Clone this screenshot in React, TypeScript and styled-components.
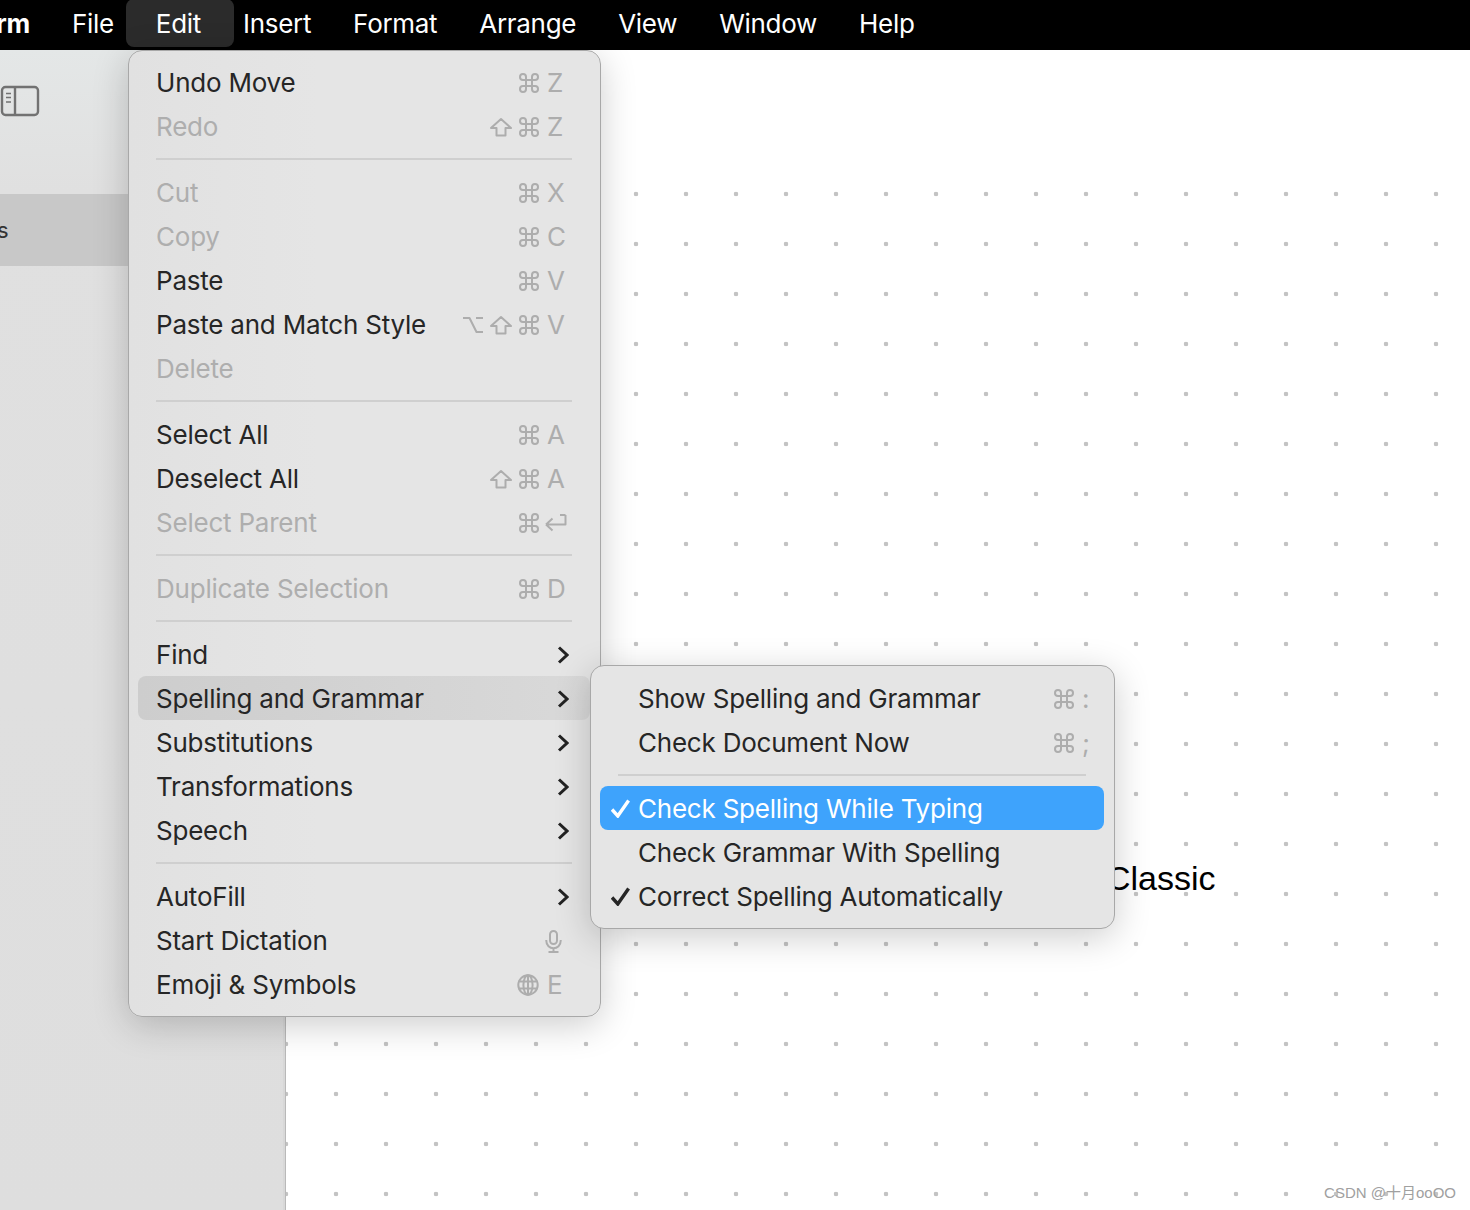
import styled, { createGlobalStyle } from "styled-components";

type Item =
  | { sep: true }
  | {
      label: string;
      off?: boolean;
      keys?: string[];
      arrow?: boolean;
      hover?: boolean;
      blue?: boolean;
      check?: boolean;
    };

const editMenu: Item[] = [
  { label: "Undo Move", keys: ["cmd", "Z"] },
  { label: "Redo", off: true, keys: ["shift", "cmd", "Z"] },
  { sep: true },
  { label: "Cut", off: true, keys: ["cmd", "X"] },
  { label: "Copy", off: true, keys: ["cmd", "C"] },
  { label: "Paste", keys: ["cmd", "V"] },
  { label: "Paste and Match Style", keys: ["opt", "shift", "cmd", "V"] },
  { label: "Delete", off: true },
  { sep: true },
  { label: "Select All", keys: ["cmd", "A"] },
  { label: "Deselect All", keys: ["shift", "cmd", "A"] },
  { label: "Select Parent", off: true, keys: ["cmd", "return"] },
  { sep: true },
  { label: "Duplicate Selection", off: true, keys: ["cmd", "D"] },
  { sep: true },
  { label: "Find", arrow: true },
  { label: "Spelling and Grammar", arrow: true, hover: true },
  { label: "Substitutions", arrow: true },
  { label: "Transformations", arrow: true },
  { label: "Speech", arrow: true },
  { sep: true },
  { label: "AutoFill", arrow: true },
  { label: "Start Dictation", keys: ["mic"] },
  { label: "Emoji & Symbols", keys: ["globe", "E"] },
];

const spellMenu: Item[] = [
  { label: "Show Spelling and Grammar", keys: ["cmd", ":"] },
  { label: "Check Document Now", keys: ["cmd", ";"] },
  { sep: true },
  { label: "Check Spelling While Typing", blue: true, check: true },
  { label: "Check Grammar With Spelling" },
  { label: "Correct Spelling Automatically", check: true },
];

const topMenus = ["File", "Edit", "Insert", "Format", "Arrange", "View", "Window", "Help"];

const KeyIcon = ({ name }: { name: string }) => {
  if (name === "cmd")
    return (
      <Glyph width="24" height="24" viewBox="0 0 24 24">
        <path d="M15 6v12a3 3 0 1 0 3-3H6a3 3 0 1 0 3 3V6a3 3 0 1 0-3 3h12a3 3 0 1 0-3-3" />
      </Glyph>
    );
  if (name === "shift")
    return (
      <ShiftGlyph width="22" height="20" viewBox="0 0 22 20">
        <path d="M11 2 L21 11 H15.5 V18.5 H6.5 V11 H1 Z" />
      </ShiftGlyph>
    );
  if (name === "opt")
    return (
      <Glyph width="22" height="18" viewBox="0 0 22 18">
        <path d="M1 2 H7.5 L14.5 16 H21 M14 2 H21" />
      </Glyph>
    );
  if (name === "return")
    return (
      <ReturnGlyph width="23" height="20" viewBox="0 0 23 20">
        <path d="M21.5 2 H16 M21.5 2 V11.5 H2 M2 11.5 L8.5 5.5 M2 11.5 L8.5 17.5" />
      </ReturnGlyph>
    );
  if (name === "mic")
    return (
      <MicGlyph width="17" height="23" viewBox="0 0 17 23">
        <rect x="5" y="1" width="7" height="13" rx="3.5" />
        <path d="M1.2 10 C1.2 21 15.8 21 15.8 10 M8.5 18 V22 M3.5 22 H13.5" />
      </MicGlyph>
    );
  if (name === "globe")
    return (
      <GlobeGlyph width="22" height="22" viewBox="0 0 22 22">
        <circle cx="11" cy="11" r="9.7" />
        <ellipse cx="11" cy="11" rx="4.6" ry="9.7" />
        <path d="M11 1 V21 M1.5 7.5 H20.5 M1.5 14.5 H20.5" />
      </GlobeGlyph>
    );
  return <KeyLetter>{name}</KeyLetter>;
};

const MenuRows = ({ items, $sub }: { items: Item[]; $sub?: boolean }) => (
  <>
    {items.map((item, idx) =>
      "sep" in item ? (
        <Separator key={idx} />
      ) : (
        <Row key={item.label} $sub={$sub} $off={item.off} $hover={item.hover} $blue={item.blue}>
          {$sub && (
            <CheckSlot>
              {item.check && (
                <svg width="20" height="19" viewBox="0 0 20 19" fill="none" stroke="currentColor" strokeWidth="3.4">
                  <path d="M1 10.5 L6.8 17 L17.6 1.5" />
                </svg>
              )}
            </CheckSlot>
          )}
          <RowLabel>{item.label}</RowLabel>
          {item.keys && (
            <Shortcut $sub={$sub}>
              {item.keys.map((k) => (
                <KeyIcon key={k} name={k} />
              ))}
            </Shortcut>
          )}
          {item.arrow && (
            <Chevron width="12" height="18" viewBox="0 0 12 18">
              <path d="M2 1.5 L10 9 L2 16.5" />
            </Chevron>
          )}
        </Row>
      )
    )}
  </>
);

const App = () => {
  return (
    <Page>
      <GlobalStyle />
      <MenuBar>
        <AppName>rm</AppName>
        {topMenus.map((name) => (
          <TopItem key={name} $open={name === "Edit"}>
            <span>{name}</span>
          </TopItem>
        ))}
      </MenuBar>
      <Body>
        <Sidebar>
          <SidebarTop>
            <svg width="40" height="32" viewBox="0 0 40 32" fill="none" stroke="#727272" strokeWidth="2.4">
              <rect x="2" y="2" width="36" height="28" rx="3.5" />
              <path d="M15 2 V30" />
              <path d="M6 8.5 H11 M6 12.5 H11 M6 17 H11" strokeWidth="1.6" />
            </svg>
          </SidebarTop>
          <SidebarRow>s</SidebarRow>
        </Sidebar>
        <Canvas>
          <DotGrid />
          <NodeTitle>Classic</NodeTitle>
        </Canvas>
      </Body>
      <EditPanel>
        <MenuRows items={editMenu} />
      </EditPanel>
      <SpellPanel>
        <MenuRows items={spellMenu} $sub />
      </SpellPanel>
      <Watermark>CSDN @十月ooOO</Watermark>
    </Page>
  );
};

export default App;

const GlobalStyle = createGlobalStyle`
  html, body {
    margin: 0;
    padding: 0;
    background: #fff;
  }
  body {
    font-family: Inter, "Liberation Sans", sans-serif;
  }
`;

const Page = styled.div`
  position: relative;
  width: 1470px;
  height: 1210px;
  overflow: hidden;
  display: flex;
  flex-direction: column;
`;

const MenuBar = styled.div`
  height: 50px;
  flex: none;
  background: #000;
  color: #fff;
  display: flex;
  align-items: center;
  gap: 42px;
  font-size: 26px;
  letter-spacing: -0.3px;
`;

const AppName = styled.div`
  font-weight: 700;
  margin-left: -4px;
  padding-bottom: 3px;
`;

const TopItem = styled.div<{ $open?: boolean }>`
  position: relative;
  padding-bottom: 3px;

  span {
    position: relative;
  }

  &::before {
    content: "";
    display: ${(p) => (p.$open ? "block" : "none")};
    position: absolute;
    left: -30px;
    right: -33px;
    top: -9px;
    height: 48px;
    border-radius: 8px;
    background: #2b2b2b;
  }
`;

const Body = styled.div`
  flex: 1;
  display: flex;
  min-height: 0;
`;

const Sidebar = styled.div`
  width: 285px;
  flex: none;
  background: linear-gradient(to bottom, #e4e7e7, #e0e0e0 140px, #dedede);
  border-right: 1px solid #b9b9b9;
  box-shadow: inset -2px 0 0 #d8d8d8;
`;

const SidebarTop = styled.div`
  height: 144px;
  box-sizing: border-box;
  padding: 35px 0 0 0;
  line-height: 0;
`;

const SidebarRow = styled.div`
  height: 72px;
  background: #c8c8c8;
  color: #333;
  font-size: 22px;
  line-height: 72px;
  text-indent: -3px;
`;

const Canvas = styled.div`
  flex: 1;
  position: relative;
  background: #fff;
  padding-top: 119px;
  display: flex;
`;

const DotGrid = styled.div`
  flex: 1;
  background-image: radial-gradient(circle at center, #c3c3c3 0, #c3c3c3 2px, transparent 2.6px);
  background-size: 50px 50px;
  background-position: -25px 0;
`;

const NodeTitle = styled.div`
  position: absolute;
  left: 820px;
  top: 806px;
  font-family: "Liberation Sans", Arial, sans-serif;
  font-size: 34px;
  line-height: 44px;
  color: #000;
`;

const Panel = styled.div`
  position: absolute;
  box-sizing: border-box;
  padding: 9px 10px 10px 9px;
  background: #e5e5e5;
  border: 1px solid #a8a8a8;
  box-shadow: 0 8px 36px rgba(0, 0, 0, 0.2);
`;

const EditPanel = styled(Panel)`
  left: 128px;
  top: 50px;
  width: 473px;
  height: 967px;
  border-radius: 14px;
  background: linear-gradient(to right, #e1e1e1, #e5e5e5 40%);
`;

const SpellPanel = styled(Panel)`
  left: 590px;
  top: 665px;
  width: 525px;
  height: 264px;
  padding-top: 10px;
  border-radius: 14px;
`;

const Row = styled.div<{ $sub?: boolean; $off?: boolean; $hover?: boolean; $blue?: boolean }>`
  height: 44px;
  box-sizing: border-box;
  padding-left: ${(p) => (p.$sub ? 11 : 18)}px;
  display: flex;
  align-items: center;
  font-size: 26px;
  letter-spacing: -0.22px;
  border-radius: 8px;
  color: ${(p) => (p.$blue ? "#fff" : p.$off ? "#aeaeae" : "#262626")};
  background: ${(p) =>
    p.$blue ? "#3ea3fc" : p.$hover ? "linear-gradient(to right, #cdcdcd, #d9d9d9)" : "transparent"};
`;

const CheckSlot = styled.div`
  width: 27px;
  flex: none;
  display: flex;
  align-items: center;
  line-height: 0;
`;

const RowLabel = styled.div`
  flex: 1;
  white-space: nowrap;
`;

const Shortcut = styled.div<{ $sub?: boolean }>`
  display: flex;
  align-items: center;
  gap: 6px;
  color: #adadad;
  margin-top: 2px;
  margin-right: ${(p) => (p.$sub ? 5 : 26)}px;
`;

const Glyph = styled.svg`
  flex: none;
  fill: none;
  stroke: currentColor;
  stroke-width: 2;
  stroke-linejoin: round;
`;

const ShiftGlyph = styled(Glyph)`
  margin-right: -1px;
`;

const ReturnGlyph = styled(Glyph)`
  margin: 0 -3px;
`;

const MicGlyph = styled(Glyph)`
  margin-right: 2px;
`;

const GlobeGlyph = styled(Glyph)`
  margin-right: 2px;
`;

const KeyLetter = styled.div`
  width: 17px;
  font-size: 26px;
  line-height: 24px;
`;

const Chevron = styled.svg`
  flex: none;
  margin-top: 2px;
  margin-right: 21px;
  fill: none;
  stroke: #222;
  stroke-width: 3;
`;

const Separator = styled.div`
  height: 2px;
  margin: 10px 18px;
  background: #cfcfcf;
`;

const Watermark = styled.div`
  position: absolute;
  right: 14px;
  bottom: 8px;
  font-family: "Liberation Sans", "Noto Sans CJK SC", sans-serif;
  font-size: 15px;
  color: #a0a0a0;
`;
